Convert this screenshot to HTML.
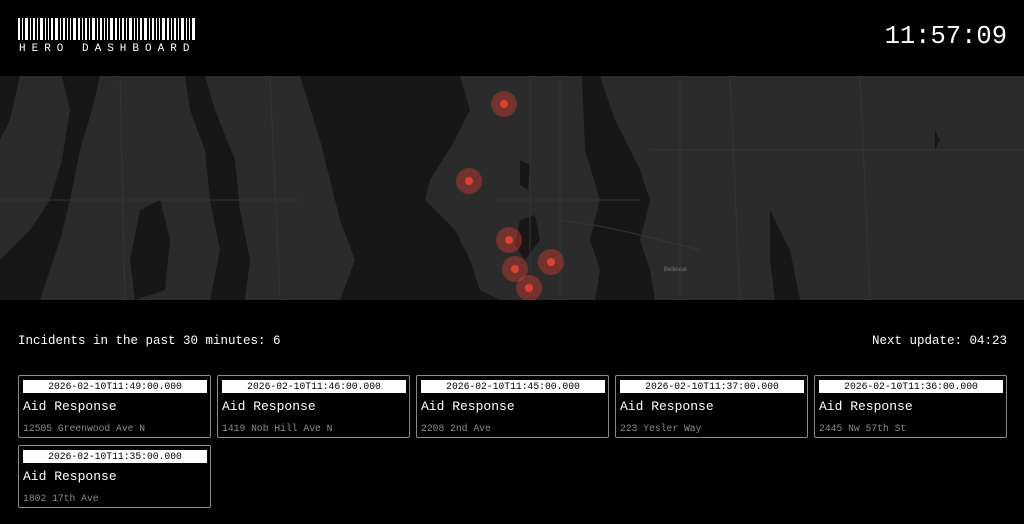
<!DOCTYPE html>
<html><head><meta charset="utf-8"><style>
*{margin:0;padding:0;box-sizing:border-box}
body{width:1024px;height:524px;background:#000;color:#fff;font-family:"Liberation Mono",monospace;position:relative;overflow:hidden}
.abs{position:absolute}
.title{left:19px;top:43px;font-size:11px;letter-spacing:6px;line-height:12px}
.clock{right:17px;top:22px;font-size:25.5px;line-height:30px}
.map{left:0;top:76px;width:1024px;height:224px;background:#2b2b2b;overflow:hidden}
.info{top:333px;font-size:12.5px;line-height:16px}
.card{position:absolute;width:193px;height:63px;border:1px solid #8a8a8a;border-radius:2px;background:#000}
.ts{position:absolute;left:4px;top:4px;width:184px;height:13px;background:#fff;color:#000;font-size:9.7px;line-height:13px;text-align:center}
.ct{position:absolute;left:4px;top:23px;font-size:13px;line-height:16px}
.ad{position:absolute;left:4px;top:47px;font-size:9.7px;line-height:12px;color:#8a8a8a}
</style></head><body>
<svg class="abs" style="left:18px;top:18px" width="178" height="22">
<g fill="#fff">
<rect x="0" y="0" width="2" height="22"/><rect x="4" y="0" width="1" height="22"/><rect x="7" y="0" width="3" height="22"/><rect x="12" y="0" width="1" height="22"/><rect x="15" y="0" width="2" height="22"/><rect x="19" y="0" width="1" height="22"/><rect x="22" y="0" width="3" height="22"/><rect x="27" y="0" width="1" height="22"/><rect x="30" y="0" width="1" height="22"/><rect x="33" y="0" width="2" height="22"/><rect x="37" y="0" width="3" height="22"/><rect x="42" y="0" width="1" height="22"/><rect x="45" y="0" width="2" height="22"/><rect x="49" y="0" width="1" height="22"/><rect x="52" y="0" width="1" height="22"/><rect x="55" y="0" width="3" height="22"/><rect x="60" y="0" width="2" height="22"/><rect x="64" y="0" width="1" height="22"/><rect x="67" y="0" width="2" height="22"/><rect x="71" y="0" width="1" height="22"/><rect x="74" y="0" width="3" height="22"/><rect x="79" y="0" width="1" height="22"/><rect x="82" y="0" width="2" height="22"/><rect x="86" y="0" width="1" height="22"/><rect x="89" y="0" width="1" height="22"/><rect x="92" y="0" width="3" height="22"/><rect x="97" y="0" width="2" height="22"/><rect x="101" y="0" width="1" height="22"/><rect x="104" y="0" width="2" height="22"/><rect x="108" y="0" width="1" height="22"/><rect x="111" y="0" width="3" height="22"/><rect x="116" y="0" width="1" height="22"/><rect x="119" y="0" width="1" height="22"/><rect x="122" y="0" width="2" height="22"/><rect x="126" y="0" width="3" height="22"/><rect x="131" y="0" width="1" height="22"/><rect x="134" y="0" width="2" height="22"/><rect x="138" y="0" width="1" height="22"/><rect x="141" y="0" width="1" height="22"/><rect x="144" y="0" width="3" height="22"/><rect x="149" y="0" width="2" height="22"/><rect x="153" y="0" width="1" height="22"/><rect x="156" y="0" width="2" height="22"/><rect x="160" y="0" width="1" height="22"/><rect x="163" y="0" width="3" height="22"/><rect x="168" y="0" width="1" height="22"/><rect x="171" y="0" width="1" height="22"/><rect x="174" y="0" width="3" height="22"/>
</g></svg>
<div class="abs title">HERO DASHBOARD</div>
<div class="abs clock">11:57:09</div>

<div class="abs map">
<svg width="1024" height="224" viewBox="0 76 1024 224">
<g fill="#171717">
<path d="M300 76 L460 76 L470 110 L455 140 L430 180 L425 200 L455 230 L470 260 L480 290 L500 300 L340 300 L355 260 L340 220 L330 180 L320 140 Z"/>
<path d="M582 76 L600 76 L615 120 L640 170 L650 200 L640 240 L650 270 L655 300 L595 300 L600 270 L590 240 L600 200 L585 150 Z"/>
<path d="M62 76 L100 76 L92 110 L80 150 L70 200 L60 240 L40 300 L0 300 L0 260 L30 230 L50 200 L62 160 L70 110 Z"/>
<path d="M185 76 L205 76 L215 110 L235 160 L240 210 L250 260 L245 300 L210 300 L220 250 L210 200 L205 150 L190 110 Z"/>
<path d="M140 210 L160 200 L170 240 L165 290 L135 300 L130 260 Z"/>
<path d="M520 220 L535 215 L540 240 L525 260 L515 245 Z"/>
<path d="M520 160 L530 165 L528 190 L520 185 Z"/>
<path d="M770 210 L790 250 L800 300 L775 300 L770 260 Z"/>
<path d="M0 76 L20 76 L10 120 L0 140 Z"/>
<path d="M935 130 L940 140 L935 150 Z"/>
</g>
<g stroke="#363636" stroke-width="1" fill="none">
<path d="M530 76 L530 300 M560 76 L560 300 M495 200 L640 200 M560 220 Q600 225 640 235 L700 250"/>
<path d="M680 76 L680 300 M730 76 L740 300 M860 76 L870 300 M650 150 L1024 150"/>
<path d="M120 76 L125 300 M270 76 L280 300 M0 200 L300 200"/>
</g>
<g fill="#e0402f">
<circle cx="504" cy="104" r="13" fill-opacity=".4"/><circle cx="504" cy="104" r="4"/>
<circle cx="469" cy="181" r="13" fill-opacity=".4"/><circle cx="469" cy="181" r="4"/>
<circle cx="509" cy="240" r="13" fill-opacity=".4"/><circle cx="509" cy="240" r="4"/>
<circle cx="515" cy="269" r="13" fill-opacity=".4"/><circle cx="515" cy="269" r="4"/>
<circle cx="551" cy="262" r="13" fill-opacity=".4"/><circle cx="551" cy="262" r="4"/>
<circle cx="529" cy="288" r="13" fill-opacity=".4"/><circle cx="529" cy="288" r="4"/>
</g>
<text x="664" y="271" fill="#777" font-size="6" font-family="Liberation Sans, sans-serif">Bellevue</text>
</svg>
</div>

<div class="abs info" style="left:18px">Incidents in the past 30 minutes: 6</div>
<div class="abs info" style="right:17px">Next update: 04:23</div>

<div class="card" style="left:18px;top:375px"><div class="ts">2026-02-10T11:49:00.000</div><div class="ct">Aid Response</div><div class="ad">12505 Greenwood Ave N</div></div>
<div class="card" style="left:217px;top:375px"><div class="ts">2026-02-10T11:46:00.000</div><div class="ct">Aid Response</div><div class="ad">1419 Nob Hill Ave N</div></div>
<div class="card" style="left:416px;top:375px"><div class="ts">2026-02-10T11:45:00.000</div><div class="ct">Aid Response</div><div class="ad">2208 2nd Ave</div></div>
<div class="card" style="left:615px;top:375px"><div class="ts">2026-02-10T11:37:00.000</div><div class="ct">Aid Response</div><div class="ad">223 Yesler Way</div></div>
<div class="card" style="left:814px;top:375px"><div class="ts">2026-02-10T11:36:00.000</div><div class="ct">Aid Response</div><div class="ad">2445 Nw 57th St</div></div>
<div class="card" style="left:18px;top:445px"><div class="ts">2026-02-10T11:35:00.000</div><div class="ct">Aid Response</div><div class="ad">1802 17th Ave</div></div>
</body></html>
